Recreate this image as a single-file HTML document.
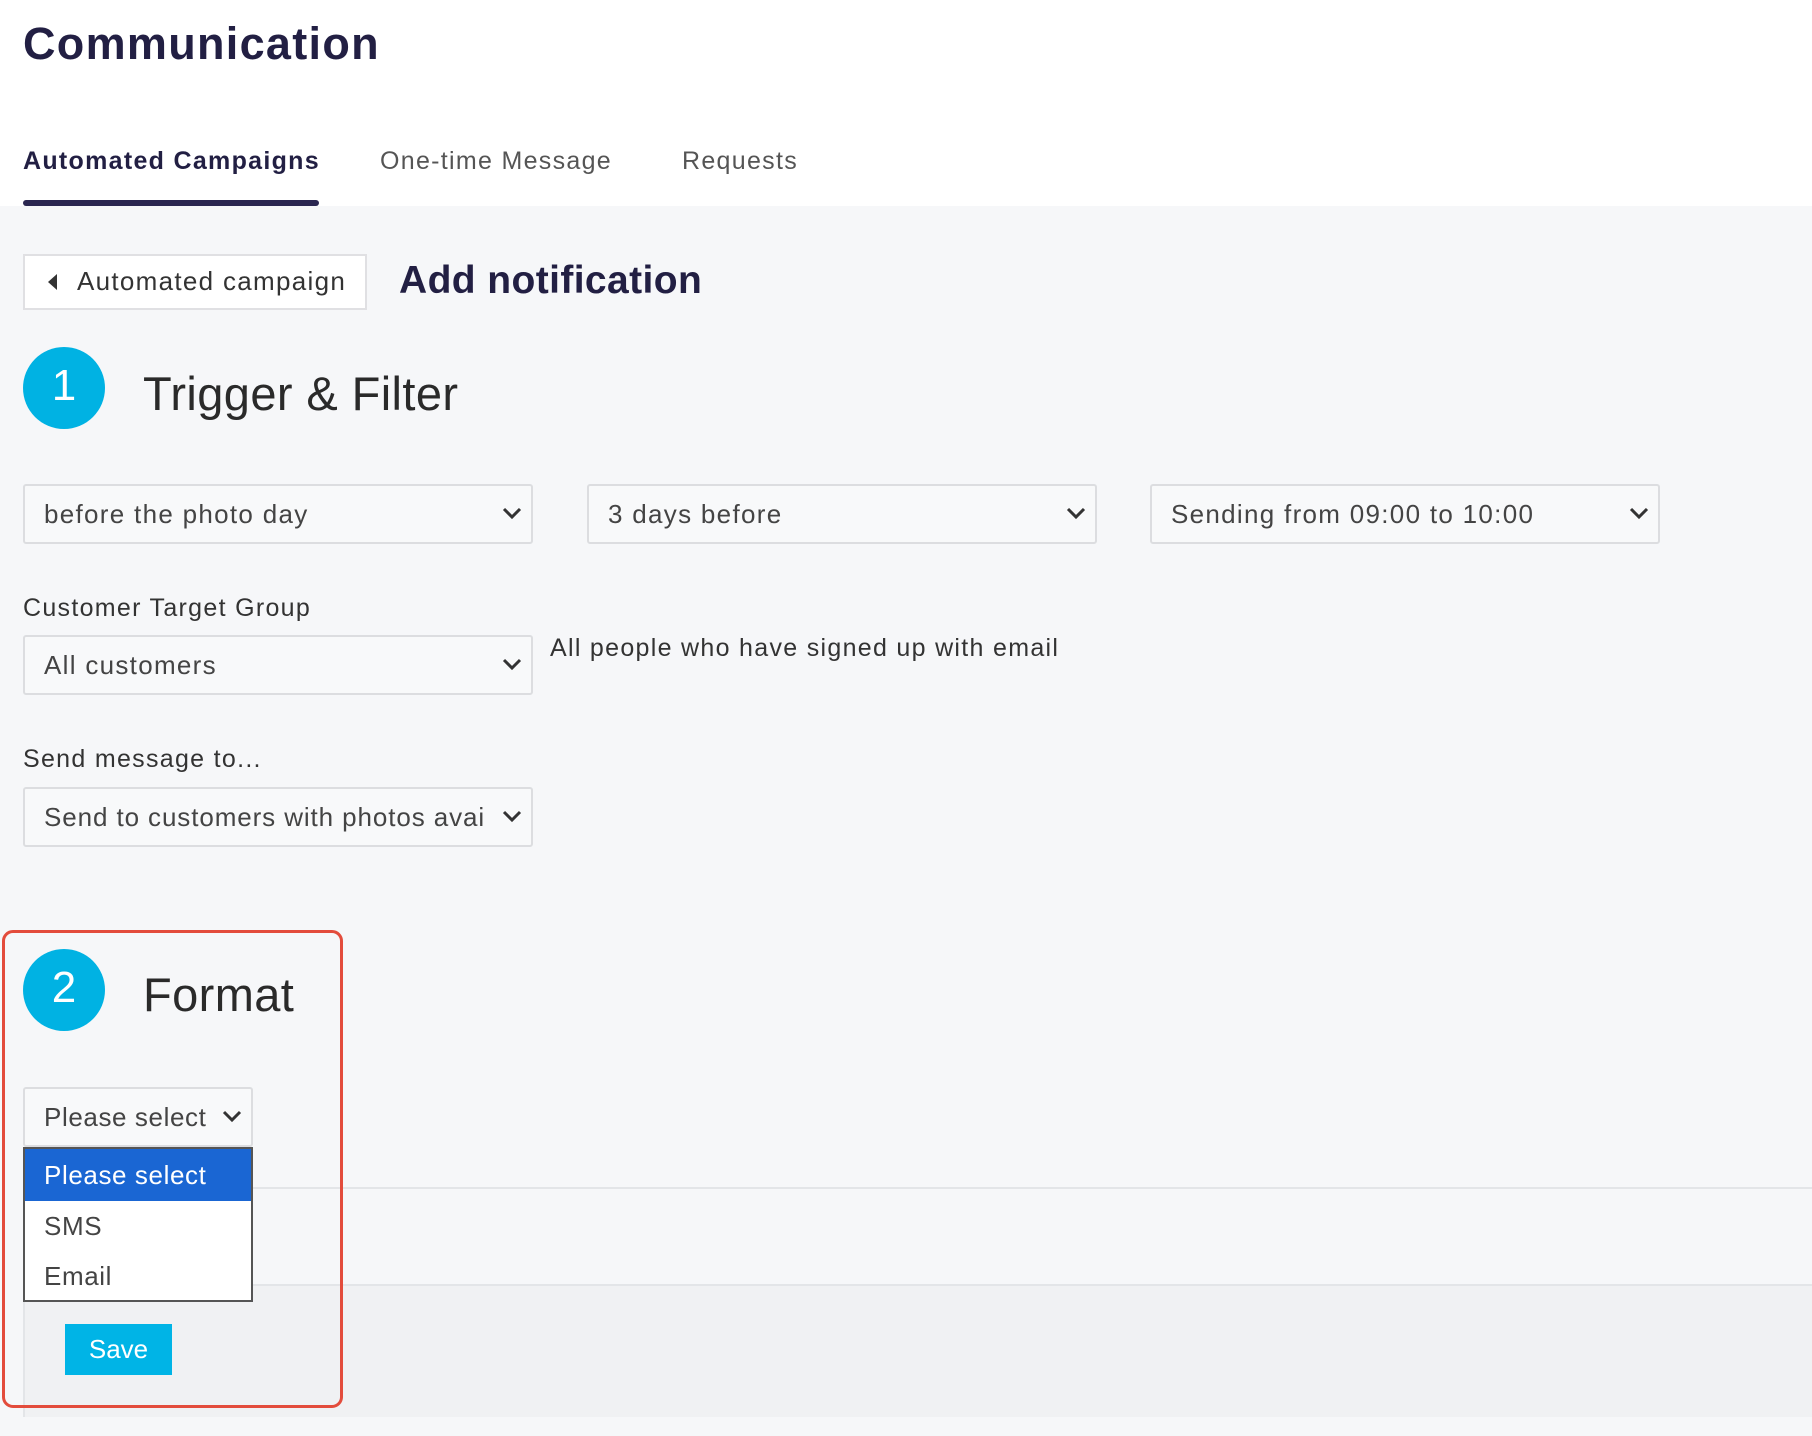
<!DOCTYPE html><html><head><style>
body{margin:0;width:1812px;height:1436px;background:#f6f7f9;font-family:"Liberation Sans",sans-serif;position:relative;overflow:hidden;color:#333;letter-spacing:1.3px}
.a{position:absolute}
.hdr{left:0;top:0;width:1812px;height:206px;background:#fff}
.sel{position:absolute;background:#f8f9fa;border:2px solid #dcdde0;border-radius:3px;box-sizing:border-box;font-size:26px;color:#444;padding-left:19px;line-height:56px}
.sel svg{position:absolute;right:8px;top:20px}
.circ{position:absolute;width:82px;height:82px;border-radius:50%;background:#00b2e3;color:#fff;font-size:44px;text-align:center;line-height:78px;letter-spacing:0}
.h{position:absolute;font-size:47px;color:#2a2a2a;letter-spacing:0.4px}
.lbl{position:absolute;font-size:25px;color:#333}
</style></head><body>
<div class="a hdr"></div>
<div class="a" style="left:23px;top:18px;font-size:45px;font-weight:bold;color:#221f43">Communication</div>
<div class="a" style="left:23px;top:147px;font-size:25px;font-weight:bold;color:#221f43">Automated Campaigns</div>
<div class="a" style="left:380px;top:147px;font-size:25px;color:#555">One-time Message</div>
<div class="a" style="left:682px;top:147px;font-size:25px;color:#555">Requests</div>
<div class="a" style="left:23px;top:200px;width:296px;height:6px;background:#2a2650;border-radius:3px"></div>
<div class="a" style="left:23px;top:254px;width:344px;height:56px;background:#fff;border:2px solid #e0e0e3;box-sizing:border-box"></div>
<div class="a" style="left:48px;top:274px;width:0;height:0;border-top:8px solid transparent;border-bottom:8px solid transparent;border-right:9px solid #333"></div>
<div class="a" style="left:77px;top:266px;font-size:26px;color:#333">Automated campaign</div>
<div class="a" style="left:399px;top:259px;font-size:39px;font-weight:bold;color:#221f43;letter-spacing:0.4px">Add notification</div>
<div class="circ" style="left:23px;top:347px">1</div>
<div class="h" style="left:143px;top:366px">Trigger &amp; Filter</div>
<div class="sel" style="left:23px;top:484px;width:510px;height:60px">before the photo day<svg width="22" height="14"><path d="M3 3l8 8 8-8" stroke="#333" stroke-width="3" fill="none"/></svg></div>
<div class="sel" style="left:587px;top:484px;width:510px;height:60px">3 days before<svg width="22" height="14"><path d="M3 3l8 8 8-8" stroke="#333" stroke-width="3" fill="none"/></svg></div>
<div class="sel" style="left:1150px;top:484px;width:510px;height:60px">Sending from 09:00 to 10:00<svg width="22" height="14"><path d="M3 3l8 8 8-8" stroke="#333" stroke-width="3" fill="none"/></svg></div>
<div class="lbl" style="left:23px;top:594px">Customer Target Group</div>
<div class="sel" style="left:23px;top:635px;width:510px;height:60px">All customers<svg width="22" height="14"><path d="M3 3l8 8 8-8" stroke="#333" stroke-width="3" fill="none"/></svg></div>
<div class="lbl" style="left:550px;top:634px">All people who have signed up with email</div>
<div class="lbl" style="left:23px;top:745px">Send message to...</div>
<div class="sel" style="left:23px;top:787px;width:510px;height:60px;overflow:hidden;white-space:nowrap;letter-spacing:0.9px">Send to customers with photos avai<svg width="22" height="14"><path d="M3 3l8 8 8-8" stroke="#333" stroke-width="3" fill="none"/></svg></div>
<div class="a" style="left:23px;top:1187px;width:1800px;height:230px;border:2px solid #e3e5e8;box-sizing:border-box;border-right:none"></div>
<div class="a" style="left:25px;top:1284px;width:1800px;height:131px;background:#f0f1f3;border-top:2px solid #e3e5e8"></div>
<div class="a" style="left:65px;top:1324px;width:107px;height:51px;background:#00b4e6;color:#fff;font-size:26px;text-align:center;line-height:51px;letter-spacing:0">Save</div>
<div class="circ" style="left:23px;top:949px">2</div>
<div class="h" style="left:143px;top:967px">Format</div>
<div class="sel" style="left:23px;top:1087px;width:230px;height:60px;letter-spacing:0.6px">Please select<svg width="22" height="14"><path d="M3 3l8 8 8-8" stroke="#333" stroke-width="3" fill="none"/></svg></div>
<div class="a" style="left:23px;top:1147px;width:230px;height:155px;background:#fff;border:2px solid #555;box-sizing:border-box;font-size:26px;color:#444;letter-spacing:0.6px">
<div style="background:#1a66d3;color:#fff;height:52px;line-height:52px;padding-left:19px">Please select</div>
<div style="height:50px;line-height:50px;padding-left:19px">SMS</div>
<div style="height:50px;line-height:50px;padding-left:19px">Email</div></div>
<div class="a" style="left:2px;top:930px;width:341px;height:478px;border:3px solid #e34c3c;border-radius:11px;box-sizing:border-box"></div>
</body></html>
